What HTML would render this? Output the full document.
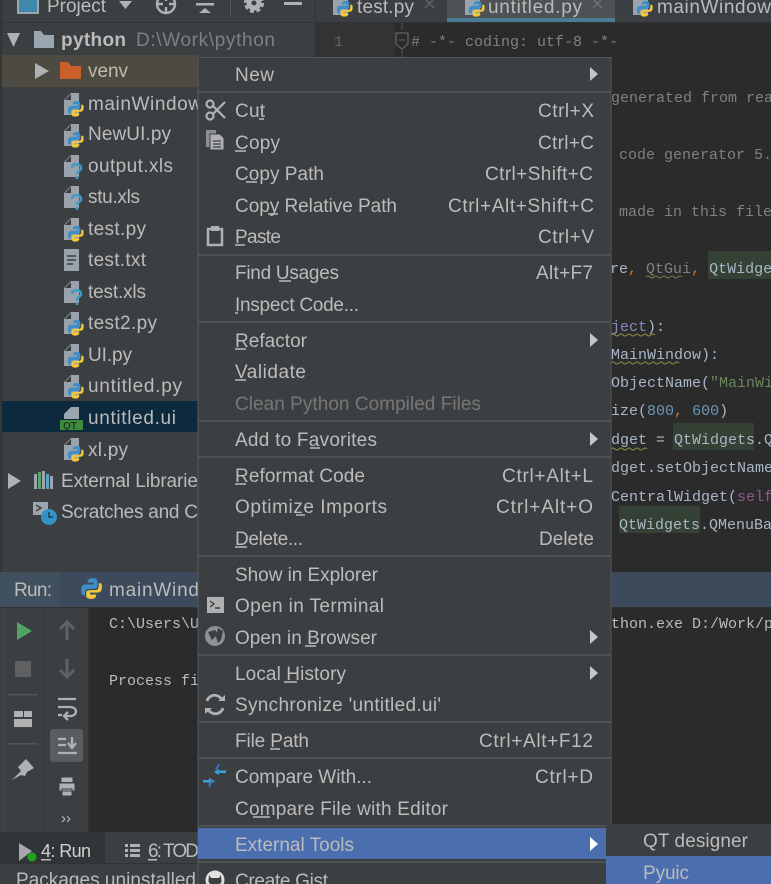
<!DOCTYPE html>
<html><head><meta charset="utf-8"><title>PyCharm</title>
<style>
html,body{margin:0;padding:0;background:#2b2b2b;width:771px;height:884px;overflow:hidden}
svg{display:block;position:absolute;left:0;top:0}
text{font-family:"Liberation Sans",sans-serif;font-size:19px;fill:#bbb}
.m{font-family:"Liberation Mono",monospace;font-size:15px;fill:#a9b7c6}
.c{fill:#808080}
</style></head><body>
<svg width="771" height="884" viewBox="0 0 771 884" xmlns="http://www.w3.org/2000/svg">
<defs>
<g id="page"><path d="M0 7 7 0H15V22H0Z" fill="#9aa3ab"/><path d="M1 7H7V1Z" fill="#3c3f41"/></g>
<g id="snake"><path d="M1 10C1 6 3 6 7 6H11V4.500H6C6 2 8 1 10 1C13 1 14 2 14 4V7.500C14 9 12 9.500 10 9.500H7C5 9.500 4 11 4 13V14.500H3C1 14.500 1 12 1 10Z" fill="#3d8fc6"/><path d="M17.500 8C17.500 12 16 12.500 12 12.500H8V14H13C13 17 11 17.500 9 17.500C6 17.500 5 16.500 5 15V12C5 11 7 10.500 9 10.500H12C14 10.500 15 9.500 15 7V5H16C17.500 5 17.500 6 17.500 8Z" fill="#f2c73a"/></g>
<g id="py"><use href="#page"/><g transform="translate(3 7) scale(.95)"><use href="#snake"/></g></g>
<g id="xq"><use href="#page"/><path d="M8 13C8 8 17 8 17 13C17 16 13 16 13 19M13 21V24" fill="none" stroke="#3a9dc9" stroke-width="2.500"/></g>
<g id="sep"><rect x="198" width="413" height="2" fill="#4f5254"/></g>
</defs>

<rect width="771" height="884" fill="#2b2b2b"/>
<rect width="315" height="572" fill="#3c3f41"/>
<rect x="0" y="0" width="2" height="572" fill="#333638"/>
<rect y="22" width="315" height="1" fill="#323232"/>

<!-- project toolbar -->
<rect x="18" y="-8" width="20" height="21" fill="#3d88ab" stroke="#9aa7b0" stroke-width="2"/>
<text x="47" y="12" textLength="59">Project</text>
<path d="M119 1H132L125.500 9Z" fill="#afb1b3"/>
<circle cx="166" cy="4" r="9" fill="none" stroke="#afb1b3" stroke-width="2.400"/>
<path d="M166-5V1M166 7V13M157 4H163M169 4H175" stroke="#afb1b3" stroke-width="2.400"/>
<rect x="196" y="3" width="18" height="2.500" fill="#afb1b3"/>
<path d="M205 8 199 13H211Z" fill="#afb1b3"/>
<rect x="230" y="-5" width="1" height="22" fill="#515658"/>
<circle cx="254" cy="3" r="5" fill="none" stroke="#afb1b3" stroke-width="5"/>
<circle cx="254" cy="3" r="8.500" fill="none" stroke="#afb1b3" stroke-width="3" stroke-dasharray="4 2.700"/>
<rect x="284" y="2" width="18" height="3" fill="#afb1b3"/>
<rect x="315" y="0" width="456" height="22" fill="#3c3f41"/>
<rect x="315" y="0" width="1" height="22" fill="#323232"/>

<!-- tabs -->
<rect x="447" y="0" width="168" height="19" fill="#4e5254"/>
<rect x="447" y="18" width="168" height="4" fill="#4a7d93"/>
<rect x="315" y="22" width="456" height="1" fill="#323232"/>
<use href="#py" x="333" y="-7"/>
<text x="357" y="13" textLength="57">test.py</text>
<path d="M425-1 434 8M434-1 425 8" stroke="#5f6365" stroke-width="1.500"/>
<use href="#py" x="465" y="-7"/>
<text x="488" y="13" textLength="94">untitled.py</text>
<path d="M593-1 602 8M602-1 593 8" stroke="#6e7274" stroke-width="1.500"/>
<use href="#py" x="633" y="-7"/>
<text x="657" y="13" textLength="114">mainWindow</text>

<!-- tree -->
<path d="M7 33H20L13.500 47Z" fill="#afb1b3"/>
<path d="M34 31H41L44 35H54V48H34Z" fill="#9aa7b0"/>
<text x="61" y="46" textLength="65" style="font-weight:bold">python</text>
<text x="136" y="46" textLength="139" style="fill:#808080">D:\Work\python</text>

<rect x="2" y="55" width="196" height="32" fill="#4d4a42"/>
<path d="M35 63 49 71 35 79Z" fill="#afb1b3"/>
<path d="M60 62H68L71 66H81V79H60Z" fill="#cb5f2b"/>
<text x="88" y="77" textLength="40" style="fill:#c2baa9">venv</text>

<rect x="2" y="401" width="196" height="31" fill="#0d293e"/>

<use href="#py" x="64" y="93"/><text x="88" y="110" textLength="114">mainWindow</text>
<use href="#py" x="64" y="124"/><text x="88" y="140" textLength="83">NewUI.py</text>
<use href="#xq" x="64" y="155"/><text x="88" y="172" textLength="85">output.xls</text>
<use href="#xq" x="64" y="186"/><text x="88" y="203" textLength="52">stu.xls</text>
<use href="#py" x="64" y="218"/><text x="88" y="235" textLength="58">test.py</text>
<path d="M64 249H79V271H64Z" fill="#9aa3ab"/><path d="M67 256H76M67 260H76M67 264H73" stroke="#3c3f41" stroke-width="1.500"/>
<text x="88" y="266" textLength="58">test.txt</text>
<use href="#xq" x="64" y="281"/><text x="88" y="298" textLength="58">test.xls</text>
<use href="#py" x="64" y="312"/><text x="88" y="329" textLength="69">test2.py</text>
<use href="#py" x="64" y="344"/><text x="88" y="361" textLength="44">UI.py</text>
<use href="#py" x="64" y="375"/><text x="88" y="392" textLength="94">untitled.py</text>
<path d="M64 414 71 407H79V419H64Z" fill="#9aa7b0"/>
<rect x="60" y="420" width="23" height="10" fill="#3e8b3e"/>
<text x="63" y="429" textLength="14" style="font-size:10px;fill:#1d3b1d;font-weight:bold">QT</text>
<text x="88" y="424" textLength="88">untitled.ui</text>
<use href="#py" x="64" y="438"/><text x="88" y="456" textLength="40">xl.py</text>

<path d="M8 473 21 481 8 489Z" fill="#afb1b3"/>
<path d="M34 474h3v15h-3z" fill="#9aa7b0"/><path d="M38 472h3v17h-3z" fill="#62a36b"/><path d="M42 471h3v18h-3z" fill="#9aa7b0"/><path d="M46 474h3v15h-3z" fill="#5fa3c7"/><path d="M50 476h3v13h-3z" fill="#9aa7b0"/>
<text x="61" y="487" textLength="137">External Librarie</text>
<rect x="33" y="502" width="15" height="13" fill="#9aa7b0"/><path d="M36 505 41 508 36 511" fill="none" stroke="#3c3f41" stroke-width="1.500"/>
<circle cx="49" cy="517" r="8" fill="#3592c4"/><path d="M49 512V517H53" fill="none" stroke="#1c3c4e" stroke-width="1.500"/>
<text x="61" y="518" textLength="137">Scratches and C</text>

<!-- editor -->
<rect x="315" y="23" width="80" height="36" fill="#313335"/>
<text x="334" y="46" class="m" style="fill:#606366">1</text>
<path d="M402 23V30M402 50V58" stroke="#555" stroke-width="1"/>
<path d="M396 33H408V44L402 49 396 44Z" fill="none" stroke="#606366" stroke-width="1.300"/>
<path d="M399 40H405" stroke="#606366"/>
<text x="411" y="46" class="m c"># -*- coding: utf-8 -*-</text>
<text x="611" y="102" class="m c">generated from rea</text>
<text x="619" y="159" class="m c">code generator 5.</text>
<text x="619" y="216" class="m c">made in this file</text>
<rect x="708" y="251" width="63" height="28" fill="#344134"/>
<text x="610" y="273" class="m">re<tspan style="fill:#cc7832">,</tspan> <tspan style="fill:#808080">QtGui</tspan><tspan style="fill:#cc7832">,</tspan> QtWidge</text>
<path d="M646 277q2-2 4 0t4 0 4 0 4 0 4 0 4 0 4 0 4 0 4 0" fill="none" stroke="#7a7a50" stroke-width="1"/>
<text x="611" y="331" class="m" style="fill:#8888c6">ject<tspan style="fill:#a9b7c6">):</tspan></text>
<path d="M611 335q2-2 4 0t4 0 4 0 4 0 4 0 4 0 4 0 4 0 4 0 4 0 4 0" fill="none" stroke="#8f8f4a" stroke-width="1"/>
<text x="611" y="359" class="m">MainWindow):</text>
<path d="M611 363q2-2 4 0t4 0 4 0 4 0 4 0 4 0 4 0 4 0 4 0 4 0 4 0 4 0 4 0 4 0 4 0 4 0 4 0" fill="none" stroke="#8f8f4a" stroke-width="1"/>
<text x="611" y="387" class="m">ObjectName(<tspan style="fill:#6a8759">"MainWi</tspan></text>
<text x="611" y="415" class="m">ize(<tspan style="fill:#6897bb">800</tspan><tspan style="fill:#cc7832">,</tspan> <tspan style="fill:#6897bb">600</tspan>)</text>
<rect x="673" y="423" width="81" height="27" fill="#344134"/>
<text x="611" y="444" class="m">dget = QtWidgets.Q</text>
<path d="M611 449q2-2 4 0t4 0 4 0 4 0 4 0 4 0 4 0 4 0 4 0" fill="none" stroke="#8f8f4a" stroke-width="1"/>
<text x="611" y="472" class="m">dget.setObjectName</text>
<text x="611" y="501" class="m">CentralWidget(<tspan style="fill:#94558d">self</tspan></text>
<rect x="619" y="506" width="81" height="27" fill="#344134"/>
<text x="619" y="529" class="m">QtWidgets.QMenuBa</text>

<!-- run panel -->
<rect y="572" width="771" height="36" fill="#3c4a5c"/>
<rect x="0" y="572" width="60" height="36" fill="#40505f"/>
<rect y="607" width="771" height="1" fill="#323232"/>
<text x="14" y="596" textLength="38">Run:</text>
<g transform="translate(80 577) scale(1.25)"><use href="#snake"/></g>
<text x="109" y="596" textLength="90">mainWind</text>
<rect y="608" width="89" height="224" fill="#3c3f41"/>
<rect x="44" y="608" width="1" height="224" fill="#333"/>
<rect x="88" y="608" width="1" height="224" fill="#323232"/>
<rect x="4" y="608" width="1" height="224" fill="#454749"/>
<text x="109" y="628" class="m" style="fill:#bbb">C:\Users\U</text>
<text x="611" y="628" class="m" style="fill:#bbb">thon.exe D:/Work/p</text>
<text x="109" y="685" class="m" style="fill:#bbb">Process finished</text>

<path d="M17 622 32 631 17 640Z" fill="#4fa561"/>
<rect x="15" y="661" width="16" height="16" fill="#5f6163"/>
<rect x="8" y="694" width="30" height="1.500" fill="#515658"/>
<path d="M14 711H23V717H14ZM24 711H32V717H24ZM14 719H32V727H14Z" fill="#afb1b3"/>
<rect x="8" y="743" width="30" height="1.500" fill="#515658"/>
<path d="M12 780 21 771 18 767 26 759 34 768 27 772 25 776 21 775Z" fill="#afb1b3"/>
<path d="M60 629 67 622 74 629M67 622V640" fill="none" stroke="#5f6365" stroke-width="3"/>
<path d="M60 670 67 677 74 670M67 659V677" fill="none" stroke="#5f6365" stroke-width="3"/>
<path d="M58 699H76M58 707H70C78 707 78 716 70 716H65M68 712 64 716 68 720M58 715H62" fill="none" stroke="#afb1b3" stroke-width="2.300"/>
<rect x="50" y="729" width="33" height="33" rx="3" fill="#5a5d5f"/>
<path d="M58 739H66M58 745H66M58 753H77M72 737V747M68 743 72 748 76 743" fill="none" stroke="#afb1b3" stroke-width="2.300"/>
<path d="M61 782V777H73V782M59 783H75V791H59ZM62 789H72V796H62Z" fill="#afb1b3" stroke="#3c3f41" stroke-width="1"/>
<text x="61" y="823" style="font-size:15px">››</text>

<!-- bottom bar -->
<rect y="832" width="771" height="32" fill="#3c3f41"/>
<rect y="832" width="105" height="32" fill="#323537"/>
<rect y="864" width="771" height="20" fill="#3c3f41"/>
<rect y="863" width="771" height="1" fill="#323232"/>
<path d="M19 843 32 851 19 861Z" fill="#a9a5ad"/>
<circle cx="32" cy="857" r="4.500" fill="#1ea31e"/>
<text x="41" y="857" textLength="50" style="font-size:18px;fill:#d0d0d0">4: Run</text>
<rect x="41" y="859" width="10" height="1.500" fill="#bbb"/>
<path d="M125 844h3v3h-3zM125 849h3v3h-3zM125 854h3v3h-3zM130 844h10v3h-10zM130 849h10v3h-10zM130 854h10v3h-10z" fill="#afb1b3"/>
<text x="148" y="857" textLength="51">6: TOD</text>
<rect x="148" y="859" width="9" height="1.500" fill="#bbb"/>
<text x="16" y="886" textLength="180">Packages uninstalled</text>

<!-- context menu -->
<rect x="198" y="57" width="413" height="827" fill="#3c3f41"/>
<path d="M198 884V57.500H611V826" fill="none" stroke="#55585a" stroke-width="1"/>
<use href="#sep" y="91"/><use href="#sep" y="254"/><use href="#sep" y="321"/><use href="#sep" y="420"/><use href="#sep" y="456"/><use href="#sep" y="555"/><use href="#sep" y="654"/><use href="#sep" y="721"/><use href="#sep" y="757"/><use href="#sep" y="825"/><use href="#sep" y="861"/>
<rect x="198" y="828" width="408" height="31" fill="#4b6eaf"/>

<g>
<text x="235" y="81" textLength="39">New</text>
<text x="235" y="117" textLength="30">Cut</text>
<text x="235" y="149" textLength="45">Copy</text>
<text x="235" y="180" textLength="89">Copy Path</text>
<text x="235" y="212" textLength="162">Copy Relative Path</text>
<text x="235" y="243" textLength="46">Paste</text>
<text x="235" y="279" textLength="104">Find Usages</text>
<text x="235" y="311" textLength="124">Inspect Code...</text>
<text x="235" y="347" textLength="72">Refactor</text>
<text x="235" y="378" textLength="71">Validate</text>
<text x="235" y="410" textLength="246" style="fill:#777">Clean Python Compiled Files</text>
<text x="235" y="446" textLength="142">Add to Favorites</text>
<text x="235" y="482" textLength="130">Reformat Code</text>
<text x="235" y="513" textLength="152">Optimize Imports</text>
<text x="235" y="545" textLength="68">Delete...</text>
<text x="235" y="581" textLength="143">Show in Explorer</text>
<text x="235" y="612" textLength="149">Open in Terminal</text>
<text x="235" y="644" textLength="142">Open in Browser</text>
<text x="235" y="680" textLength="111">Local History</text>
<text x="235" y="711" textLength="206">Synchronize 'untitled.ui'</text>
<text x="235" y="747" textLength="74">File Path</text>
<text x="235" y="783" textLength="137">Compare With...</text>
<text x="235" y="815" textLength="213">Compare File with Editor</text>
<text x="235" y="851" textLength="119">External Tools</text>
<text x="235" y="887" textLength="93">Create Gist</text>
</g>
<path d="M259 119H264M235 151H246M246 182H257M268 214H278M235 245H245M279 281H291M235 313H238M235 349H246M235 380H246M310 448H320M235 484H246M296 515H305M235 547H247M305 646H316M284 682H297M270 749H280M253 817H270" stroke="#bbb" stroke-width="1.500" fill="none"/>

<!-- shortcuts -->
<text x="538" y="117" textLength="56">Ctrl+X</text>
<text x="538" y="149" textLength="56">Ctrl+C</text>
<text x="485" y="180" textLength="108">Ctrl+Shift+C</text>
<text x="448" y="212" textLength="146">Ctrl+Alt+Shift+C</text>
<text x="538" y="243" textLength="56">Ctrl+V</text>
<text x="536" y="279" textLength="57">Alt+F7</text>
<text x="502" y="482" textLength="91">Ctrl+Alt+L</text>
<text x="496" y="513" textLength="97">Ctrl+Alt+O</text>
<text x="539" y="545" textLength="55">Delete</text>
<text x="479" y="747" textLength="114">Ctrl+Alt+F12</text>
<text x="535" y="783" textLength="58">Ctrl+D</text>

<!-- arrows -->
<path d="M590 67 598 74 590 81ZM590 333 598 340 590 347ZM590 432 598 439 590 446ZM590 630 598 637 590 644ZM590 666 598 673 590 680Z" fill="#c4c6c8"/>
<path d="M590 837 598 844 590 851Z" fill="#fff"/>

<!-- menu icons -->
<g fill="none" stroke="#afb1b3" stroke-width="2.200">
<circle cx="210" cy="104" r="3.500"/><circle cx="210" cy="116" r="3.500"/><path d="M213 106 225 118M213 114 225 102"/>
</g>
<path d="M206 130H216V147H206Z" fill="#8d9092"/>
<path d="M210 134H220L224 138V150H210Z" fill="#afb1b3" stroke="#3c3f41"/>
<path d="M213 141H221M213 144H221M213 147H221" stroke="#3c3f41" stroke-width="1.200"/>
<path d="M208 229H222V245H208Z" fill="none" stroke="#afb1b3" stroke-width="2.500"/><rect x="211" y="226" width="8" height="5" fill="#afb1b3"/>
<rect x="207" y="597" width="17" height="16" fill="#afb1b3"/><path d="M210 601 214 604 210 607M215 608H220" fill="none" stroke="#3c3f41" stroke-width="1.400"/>
<circle cx="215" cy="636" r="10" fill="#8f9294"/><path d="M208 632 215 630 218 634 212 640ZM218 628 223 631 221 640 218 643 216 637Z" fill="#3c3f41"/>
<path d="M207 701A8 8 0 0 1 222 700M223 708A8 8 0 0 1 208 709" fill="none" stroke="#afb1b3" stroke-width="2.800"/>
<path d="M218 701H225V695ZM212 708H205V714Z" fill="#afb1b3"/>
<path d="M219 769 214 772 219 775V773H226V770.500H219ZM209 778V780H203V782.500H209V785L215 781Z" fill="#36a3d6"/>
<path d="M219 764 216 770M212 780 209 787" stroke="#3a6fb0" stroke-width="2"/>
<circle cx="215" cy="880" r="9.500" fill="#e0e0e0"/>
<path d="M209 875 211 878H219L221 875 221.500 881C221.500 884 218 885 215 885S208.500 884 208.500 881Z" fill="#3c3f41"/>

<!-- submenu -->
<rect x="606" y="824" width="165" height="60" fill="#3c3f41"/>
<rect x="606" y="856" width="165" height="28" fill="#4b6eaf"/>
<text x="643" y="847" textLength="105">QT designer</text>
<text x="643" y="879" textLength="46">Pyuic</text>
</svg>
</body></html>
